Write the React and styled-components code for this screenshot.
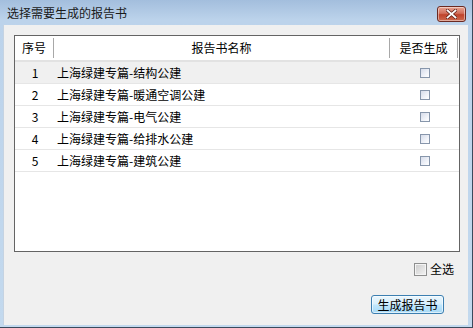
import React, { useState } from 'react';
import styled, { createGlobalStyle } from 'styled-components';

const GlobalStyle = createGlobalStyle`
  html, body {
    margin: 0;
    padding: 0;
    background: #ffffff;
  }
  body {
    font-family: "Noto Sans CJK SC", "Noto Sans", sans-serif;
    font-size: 12px;
    color: #000;
  }
`;

const Window = styled.div`
  width: 473px;
  height: 328px;
  box-sizing: border-box;
  display: flex;
  flex-direction: column;
  background: linear-gradient(#a3bedd, #bcd3eb 20px, #c3d9ee);
  border-right: 1px solid #3a4a5c;
  border-bottom: 1px solid #3a4a5c;
`;

const TitleBar = styled.div`
  height: 25px;
  flex: none;
  display: flex;
  align-items: center;
  justify-content: space-between;
  padding: 0 6px 0 7px;
  box-sizing: border-box;
`;

const Title = styled.span`
  font-size: 12px;
  line-height: 14px;
  color: #1a1a1a;
  margin-top: 1px;
`;

const CloseButton = styled.button`
  width: 29px;
  height: 16px;
  margin-top: 2px;
  padding: 0;
  border: 1px solid #6b2a22;
  border-radius: 3px;
  background: linear-gradient(#e8a493, #d16f5b 45%, #c0432b 55%, #cc6a4f);
  box-shadow: inset 0 0 0 1px rgba(255, 255, 255, 0.45);
  display: flex;
  align-items: center;
  justify-content: center;
  cursor: pointer;
`;

const Body = styled.div`
  flex: 1;
  margin: 0 4px 2px 3px;
  background: #f0f0f0;
  border-left: 1px solid #c5d3e2;
  padding: 10px 0 0 10px;
  display: flex;
  flex-direction: column;
`;

const ListBox = styled.div`
  width: 446px;
  height: 217px;
  box-sizing: border-box;
  border: 1px solid #646464;
  background: #ffffff;
`;

const HeaderRow = styled.div`
  display: grid;
  grid-template-columns: 39px 336px 68px 1fr;
  height: 24px;
  align-items: center;
  border-bottom: 2px solid #e2e2e2;
`;

const HeaderCell = styled.div`
  height: 20px;
  line-height: 20px;
  text-align: center;
  border-right: ${p => (p.$last ? 'none' : '1px solid #a8a8a8')};
  white-space: nowrap;
`;

const Row = styled.div`
  display: grid;
  grid-template-columns: 39px 336px 68px 1fr;
  height: 21px;
  align-items: center;
  border-bottom: 1px solid #e6e6e6;
  background: ${p => (p.$active ? '#f0f0f0' : '#ffffff')};
`;

const IndexCell = styled.div`
  text-align: center;
  line-height: 21px;
  padding-left: 1px;
`;

const NameCell = styled.div`
  line-height: 21px;
  padding-left: 3px;
  white-space: nowrap;
`;

const CheckCell = styled.div`
  display: flex;
  justify-content: center;
  padding-left: 1px;
`;

const SmallCheck = styled.span`
  width: 10px;
  height: 10px;
  box-sizing: border-box;
  border: 1px solid #8796ab;
  background: ${p =>
    p.$checked
      ? 'linear-gradient(135deg, #cfe3f7, #ffffff)'
      : 'linear-gradient(135deg, #d6dcea, #f4f6fb 70%, #ffffff)'};
  position: relative;
  cursor: pointer;
`;

const Footer = styled.div`
  display: flex;
  flex-direction: column;
  align-items: flex-end;
  width: 446px;
`;

const SelectAll = styled.label`
  margin-top: 10px;
  margin-right: 6px;
  display: flex;
  align-items: center;
  gap: 3px;
  cursor: pointer;
  line-height: 14px;
`;

const BigCheck = styled.span`
  width: 13px;
  height: 13px;
  box-sizing: border-box;
  border: 1px solid #8e8f8f;
  background: linear-gradient(135deg, #cbcbcb, #f4f4f4);
  box-shadow: inset 0 0 0 1px #f4f4f4;
`;

const GenerateButton = styled.button`
  margin-top: 19px;
  margin-right: 16px;
  width: 73px;
  height: 19px;
  padding: 0;
  border: 1px solid #3c7fb1;
  border-radius: 3px;
  background: linear-gradient(#eaf6fd, #d9f0fc 45%, #bee6fd 55%, #a7d9f5);
  box-shadow: inset 0 0 0 1px rgba(255, 255, 255, 0.6);
  font-family: "Noto Sans CJK SC", "Noto Sans", sans-serif;
  font-size: 12px;
  line-height: 15px;
  color: #000;
  cursor: pointer;
`;

const reports = [
  '上海绿建专篇-结构公建',
  '上海绿建专篇-暖通空调公建',
  '上海绿建专篇-电气公建',
  '上海绿建专篇-给排水公建',
  '上海绿建专篇-建筑公建',
];

const CloseIcon = () => (
  <svg width="11" height="10" viewBox="0 0 11 10">
    <path
      d="M1.5 1.5 L9.5 8.5 M9.5 1.5 L1.5 8.5"
      stroke="#5a1a12"
      strokeWidth="3.2"
      strokeLinecap="square"
    />
    <path
      d="M1.5 1.5 L9.5 8.5 M9.5 1.5 L1.5 8.5"
      stroke="#ffffff"
      strokeWidth="1.8"
      strokeLinecap="square"
    />
  </svg>
);

const App = () => {
  const [checked, setChecked] = useState(reports.map(() => false));
  const toggle = i => setChecked(c => c.map((v, j) => (j === i ? !v : v)));

  return (
    <Window>
      <GlobalStyle />
      <TitleBar>
        <Title>选择需要生成的报告书</Title>
        <CloseButton type='button' aria-label='close'>
          <CloseIcon />
        </CloseButton>
      </TitleBar>
      <Body>
        <ListBox>
          <HeaderRow>
            <HeaderCell>序号</HeaderCell>
            <HeaderCell>报告书名称</HeaderCell>
            <HeaderCell>是否生成</HeaderCell>
            <HeaderCell $last />
          </HeaderRow>
          {reports.map((name, i) => (
            <Row key={name} $active={i === 0}>
              <IndexCell>{i + 1}</IndexCell>
              <NameCell>{name}</NameCell>
              <CheckCell>
                <SmallCheck $checked={checked[i]} onClick={() => toggle(i)} />
              </CheckCell>
              <div />
            </Row>
          ))}
        </ListBox>
        <Footer>
          <SelectAll>
            <BigCheck />
            全选
          </SelectAll>
          <GenerateButton type='button'>生成报告书</GenerateButton>
        </Footer>
      </Body>
    </Window>
  );
};

export default App;
